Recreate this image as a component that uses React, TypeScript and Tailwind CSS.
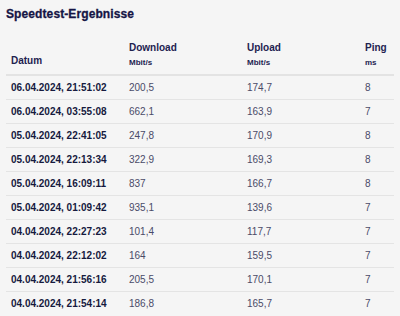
import React from "react";

const rows = [
  ["06.04.2024, 21:51:02", "200,5", "174,7", "8"],
  ["06.04.2024, 03:55:08", "662,1", "163,9", "7"],
  ["05.04.2024, 22:41:05", "247,8", "170,9", "8"],
  ["05.04.2024, 22:13:34", "322,9", "169,3", "8"],
  ["05.04.2024, 16:09:11", "837", "166,7", "8"],
  ["05.04.2024, 01:09:42", "935,1", "139,6", "7"],
  ["04.04.2024, 22:27:23", "101,4", "117,7", "7"],
  ["04.04.2024, 22:12:02", "164", "159,5", "7"],
  ["04.04.2024, 21:56:16", "205,5", "170,1", "7"],
  ["04.04.2024, 21:54:14", "186,8", "165,7", "7"],
];

export default function App() {
  return (
    <div
      className="w-[400px] h-[316px] overflow-hidden bg-[#f5f5f5] px-[6px]"
      style={{ fontFamily: '"Liberation Sans", Arial, sans-serif' }}
    >
      <h1 className="pt-[7px] text-[12px] font-bold text-[#151545] leading-[14px] tracking-[0.1px] [-webkit-text-stroke:0.3px_#151545]">
        Speedtest-Ergebnisse
      </h1>
      <div className="mt-[21px] grid grid-cols-[118px_118px_118px_1fr] items-end border-b-2 border-[#e3e3e3] pb-[7px] text-[#1e2250]">
        <div className="pl-[5px] text-[10px] font-bold leading-[12px]">Datum</div>
        <div className="pl-[5px]">
          <div className="text-[10px] font-bold leading-[12px]">Download</div>
          <div className="mt-[4px] text-[8px] font-bold leading-[9px]">Mbit/s</div>
        </div>
        <div className="pl-[5px]">
          <div className="text-[10px] font-bold leading-[12px]">Upload</div>
          <div className="mt-[4px] text-[8px] font-bold leading-[9px]">Mbit/s</div>
        </div>
        <div className="pl-[5px]">
          <div className="text-[10px] font-bold leading-[12px]">Ping</div>
          <div className="mt-[4px] text-[8px] font-bold leading-[9px]">ms</div>
        </div>
      </div>
      {rows.map((r, i) => (
        <div
          key={i}
          className={
            "grid grid-cols-[118px_118px_118px_1fr] items-center h-[24px] text-[10px] leading-[12px] " +
            (i < rows.length - 1 ? "border-b border-[#e4e4e4]" : "")
          }
        >
          <div className="pl-[5px] font-bold text-[#161a3e]">{r[0]}</div>
          <div className="pl-[5px] text-[#4a4b68]">{r[1]}</div>
          <div className="pl-[5px] text-[#4a4b68]">{r[2]}</div>
          <div className="pl-[5px] text-[#4a4b68]">{r[3]}</div>
        </div>
      ))}
    </div>
  );
}
